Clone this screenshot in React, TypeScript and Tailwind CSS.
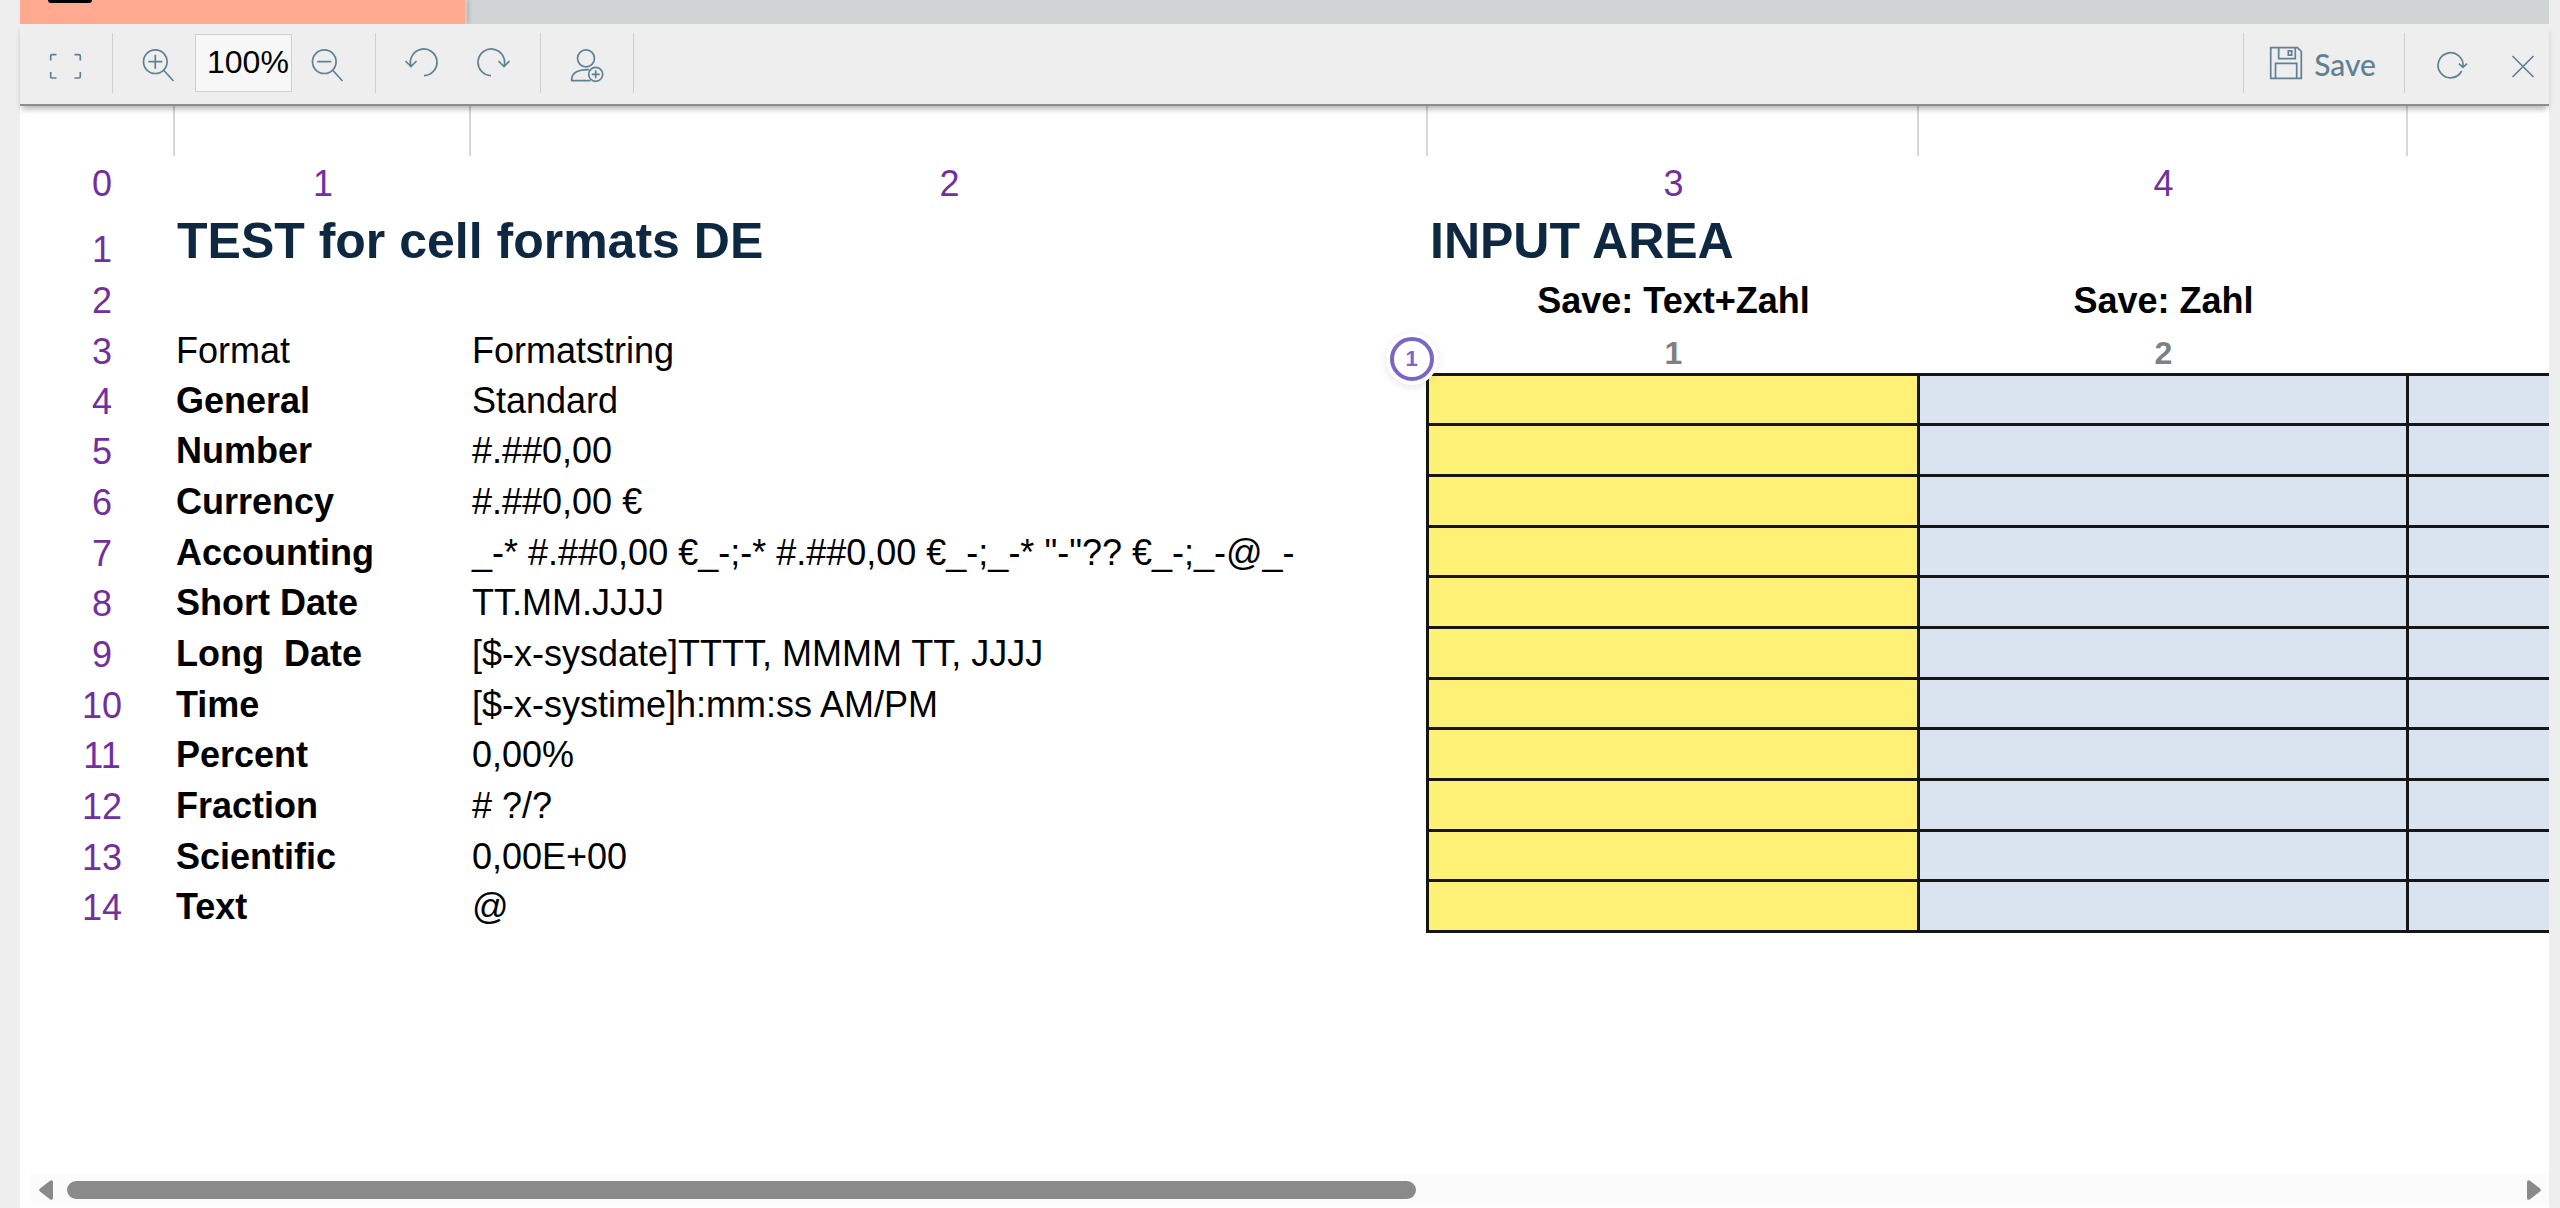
import type { ReactNode } from 'react'

const ROWS = [
  { label: 'General', format: 'Standard' },
  { label: 'Number', format: '#.##0,00' },
  { label: 'Currency', format: '#.##0,00 €' },
  { label: 'Accounting', format: '_-* #.##0,00 €_-;-* #.##0,00 €_-;_-* "-"?? €_-;_-@_-' },
  { label: 'Short Date', format: 'TT.MM.JJJJ' },
  { label: 'Long  Date', format: '[$-x-sysdate]TTTT, MMMM TT, JJJJ' },
  { label: 'Time', format: '[$-x-systime]h:mm:ss AM/PM' },
  { label: 'Percent', format: '0,00%' },
  { label: 'Fraction', format: '# ?/?' },
  { label: 'Scientific', format: '0,00E+00' },
  { label: 'Text', format: '@' },
]

// the last column runs on past the right edge, so it has no border there
const INPUT_CELLS = [
  'border-3 bg-[#fff076]',
  'border-3 bg-[#dae4f0]',
  'border-y-3 border-l-3 bg-[#dae4f0]',
]

function Icon({ width, children }: { width: number; children: ReactNode }) {
  return (
    <svg
      width={width}
      height={36}
      viewBox={`0 0 ${width} 36`}
      fill="none"
      stroke="#5f8293"
      strokeWidth={1.7}
      className="block overflow-visible"
      aria-hidden="true"
    >
      {children}
    </svg>
  )
}

function ToolButton({ label, width, children }: { label: string; width: number; children: ReactNode }) {
  return (
    <button type="button" aria-label={label} className="shrink-0">
      <Icon width={width}>{children}</Icon>
    </button>
  )
}

function Toolbar() {
  return (
    <div className="relative z-10 flex items-start justify-between bg-[#eeeeee] border-b-2 border-[#8e8e8e] pt-[9px] pb-[11px] shadow-[0_5px_6px_-2px_rgba(0,0,0,0.3)]">
      <div className="flex h-[60px]">
        <div className="flex items-center px-[30px] border-r border-[#cfcfcf]">
          <ToolButton label="Fullscreen" width={32}>
            <path d="M.7 15.5V11Q.7 9.7 2 9.7H6.5M24.5 9.7H29Q30.3 9.7 30.3 11V15.5M30.3 27V31.7Q30.3 33 29 33H24.5M6.5 33H2Q.7 33 .7 31.7V27" />
          </ToolButton>
        </div>
        <div className="flex items-center gap-5 pl-[30px] pr-[31px] border-r border-[#cfcfcf]">
          <ToolButton label="Zoom in" width={32}>
            <circle cx="12.3" cy="16.7" r="11.8" />
            <path d="M20.5 25L30.5 36M5.3 16.7H19.3M12.3 9.7V23.7" />
          </ToolButton>
          <input
            type="text"
            aria-label="Zoom"
            defaultValue="100%"
            className="w-[97px] h-[58px] pl-[11px] pb-[2px] bg-[#f7f7f7] border border-[#cfcfcf] text-[32px] leading-9 text-black outline-none"
          />
          <ToolButton label="Zoom out" width={32}>
            <circle cx="12.3" cy="16.7" r="11.8" />
            <path d="M20.5 25L30.5 36M5.3 16.7H19.3" />
          </ToolButton>
        </div>
        <div className="flex items-center gap-[37px] pl-[29px] pr-[30px] border-r border-[#cfcfcf]">
          <ToolButton label="Undo" width={34}>
            <path d="M19 30.6A13.3 13.3 0 1 0 6 21.3M.5 16L6 21.5L11.5 16" />
          </ToolButton>
          <ToolButton label="Redo" width={34}>
            <path d="M15 30.6A13.3 13.3 0 1 1 28 21.3M33.5 16L28 21.5L22.5 16" />
          </ToolButton>
        </div>
        <div className="flex items-center px-[30px] border-r border-[#cfcfcf]">
          <ToolButton label="Add user" width={32}>
            <circle cx="15" cy="13.3" r="8.5" />
            <path d="M18 24.6C7 24.2 .7 28.4 .7 34.4V35.6H19.5" />
            <circle cx="24.7" cy="29.3" r="7" />
            <path d="M20.7 29.3H28.7M24.7 25.3V33.3" />
          </ToolButton>
        </div>
      </div>

      <div className="flex h-[60px]">
        <button
          type="button"
          className="flex items-center gap-3 pl-[26px] pr-7 border-l border-[#cfcfcf] font-[Lato,sans-serif] text-[30px] leading-9 font-medium text-[#5f8293]"
        >
          <Icon width={32}>
            <path d="M.7 2.7H27.5L31.3 6.5V33.3H.7ZM8.7 2.7V13.7H25.3V2.7M18.3 5.8H21.7V10.2H18.3ZM5.5 33.3V18.3H26.7V33.3" />
          </Icon>
          <span className="pt-[2px]">Save</span>
        </button>
        <div className="flex items-center gap-[43px] pl-[33px] pr-[14px] border-l border-[#cfcfcf]">
          <ToolButton label="Reload" width={30}>
            <path d="M23.7 26A12.5 12.5 0 1 1 25 21.7M21 18.7L25 22.3L29 18.7" />
          </ToolButton>
          <ToolButton label="Close" width={24}>
            <path d="M1.5 11L22.5 32M22.5 11L1.5 32" />
          </ToolButton>
        </div>
      </div>
    </div>
  )
}

function Marker() {
  return (
    <span className="absolute -left-[39px] -top-[39px] z-10 flex size-[44px] items-center justify-center rounded-full border-4 border-[#7a66c4] bg-white text-[22px] leading-none font-bold text-[#7a66c4] shadow-[0_0_0_4px_#ffffff,0_2px_8px_4px_rgba(0,0,0,0.1)]">
      1
    </span>
  )
}

function RowNumber({ children }: { children: ReactNode }) {
  return <th scope="row" className="pl-[10px] pt-1 font-normal text-[#7030a0]">{children}</th>
}

function Sheet() {
  return (
    <div className="flex-1 overflow-hidden">
      <table className="w-full table-fixed border-collapse whitespace-pre text-[36px] leading-[41px] text-black">
        <colgroup>
          <col className="w-[154px]" />
          <col className="w-[296px]" />
          <col className="w-[957px]" />
          <col className="w-[491px]" />
          <col className="w-[489px]" />
          <col />
        </colgroup>
        <thead>
          <tr className="h-[50px]">
            {[0, 1, 2, 3, 4].map(n => <td key={n} className="border-r-2 border-[#d8d8d8]" />)}
            <td />
          </tr>
          <tr className="h-[52px] text-[#7030a0]">
            {[0, 1, 2, 3, 4].map(n => (
              <th key={n} scope="col" className={n === 0 ? 'pl-[10px] pt-[2px] font-normal' : 'pl-[2px] pt-[2px] font-normal'}>{n}</th>
            ))}
            <td />
          </tr>
        </thead>
        <tbody>
          <tr className="h-[65px] align-bottom">
            <th scope="row" className="pl-[10px] pb-[3px] font-normal text-[#7030a0]">1</th>
            <td colSpan={2} className="pl-[3px] pb-1 text-[50px] leading-[56px] font-bold text-[#0e2841]">
              TEST for cell formats DE
            </td>
            <td colSpan={3} className="pl-[3px] pb-1 text-[50px] leading-[56px] font-bold text-[#0e2841]">
              INPUT AREA
            </td>
          </tr>
          <tr className="h-[51px]">
            <RowNumber>2</RowNumber>
            <td />
            <td />
            <td className="pl-[2px] pt-[3px] text-center font-bold">Save: Text+Zahl</td>
            <td className="pl-[2px] pt-[3px] text-center font-bold">Save: Zahl</td>
            <td />
          </tr>
          <tr className="h-[50px]">
            <RowNumber>3</RowNumber>
            <td className="pl-[2px] pt-[2px]">Format</td>
            <td className="pl-[2px] pt-[2px]">Formatstring</td>
            <td className="pl-[2px] pt-[10px] text-center text-[32px] leading-9 font-bold text-[#808080]">1</td>
            <td className="pl-[2px] pt-[10px] text-center text-[32px] leading-9 font-bold text-[#808080]">2</td>
            <td />
          </tr>
        </tbody>
        <tbody>
          {ROWS.map((row, i) => (
            <tr key={row.label} className="h-[51px] nth-[3n+1]:h-[50px]">
              <RowNumber>{i + 4}</RowNumber>
              <td className="pl-[2px] pt-[2px] font-bold">{row.label}</td>
              <td className="pl-[2px] pt-[2px]">{row.format}</td>
              {INPUT_CELLS.map((cell, col) => (
                <td key={col} className={`relative border-[#161616] ${cell}`}>
                  <input
                    type="text"
                    aria-label={`${row.label}, column ${col + 1}`}
                    className="block h-10 w-full bg-transparent px-1 outline-none"
                  />
                  {i === 0 && col === 0 && <Marker />}
                </td>
              ))}
            </tr>
          ))}
        </tbody>
      </table>
    </div>
  )
}

function HorizontalScrollbar() {
  return (
    <div className="mb-[3px] ml-[11px] flex h-[31px] items-center bg-[#fbfbfb] pl-2 pr-2">
      <button type="button" aria-label="Scroll left">
        <svg width="14" height="20" viewBox="0 0 14 20" fill="#8a8a8a" className="block" aria-hidden="true">
          <path d="M1 8.6L11 .8Q14 -.8 14 2.5V17.5Q14 20.8 11 19.2L1 11.4Q-.6 10 1 8.6Z" />
        </svg>
      </button>
      <div className="ml-[14px] mr-2 flex-1">
        <div className="h-[18px] w-[55%] rounded-full bg-[#8a8a8a]" />
      </div>
      <button type="button" aria-label="Scroll right">
        <svg width="14" height="20" viewBox="0 0 14 20" fill="#8a8a8a" className="block" aria-hidden="true">
          <path d="M13 8.6L3 .8Q0 -.8 0 2.5V17.5Q0 20.8 3 19.2L13 11.4Q14.6 10 13 8.6Z" />
        </svg>
      </button>
    </div>
  )
}

export default function App() {
  return (
    <div className="min-h-screen bg-[#eeeeee] pl-5 pr-[11px] font-['Liberation_Sans',Arial,sans-serif]">
      <div className="flex min-h-screen flex-col bg-white">
        <div className="flex h-6 bg-[#d0d4d4]">
          <div className="w-[447px] border-r-2 border-[#d3cfcd] bg-[#ffaa90] pl-7 shadow-[2px_0_4px_rgba(0,0,0,0.15)]">
            <div className="h-[3px] w-11 rounded-b-[3px] bg-black" />
          </div>
        </div>
        <Toolbar />
        <Sheet />
        <HorizontalScrollbar />
      </div>
    </div>
  )
}
